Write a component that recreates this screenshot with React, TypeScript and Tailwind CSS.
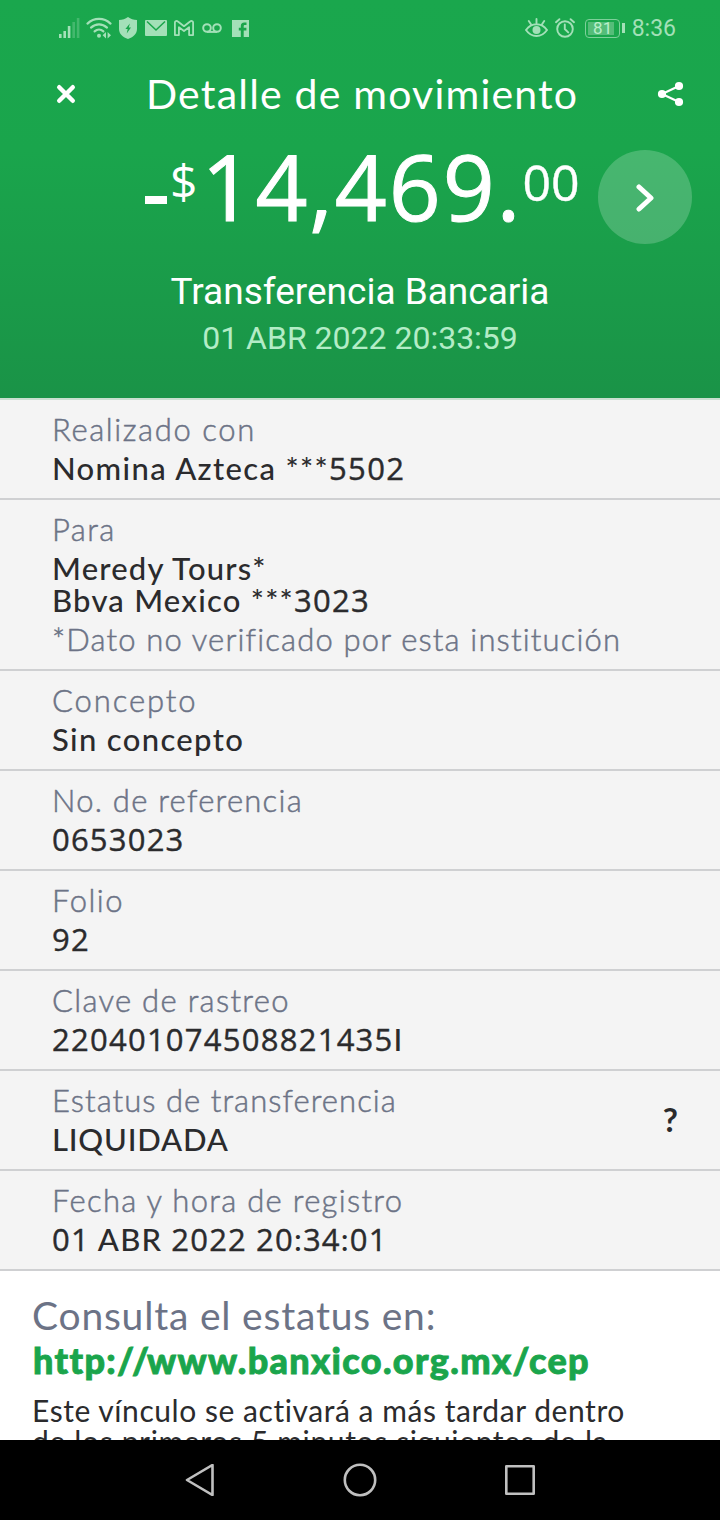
import clsx from 'clsx'

type Line = { text: string; muted?: boolean; className: string }

type Row = { label: string; labelClass: string; lines: Line[]; help?: boolean }

const ROWS: Row[] = [
  {
    label: 'Realizado con',
    labelClass: 'tracking-[1.6px]',
    lines: [{ text: 'Nomina Azteca ***5502', className: 'tracking-[1.35px]' }],
  },
  {
    label: 'Para',
    labelClass: 'tracking-[1.4px]',
    lines: [
      { text: 'Meredy Tours*', className: 'tracking-[1.2px]' },
      { text: 'Bbva Mexico ***3023', className: 'tracking-[1.25px]' },
      { text: '*Dato no verificado por esta institución', muted: true, className: 'tracking-[1.15px]' },
    ],
  },
  {
    label: 'Concepto',
    labelClass: 'tracking-[1.9px]',
    lines: [{ text: 'Sin concepto', className: 'tracking-[1.35px]' }],
  },
  {
    label: 'No. de referencia',
    labelClass: 'tracking-[1.25px]',
    lines: [{ text: '0653023', className: 'tracking-[1.2px]' }],
  },
  {
    label: 'Folio',
    labelClass: 'tracking-[1.5px]',
    lines: [{ text: '92', className: 'tracking-[1.2px]' }],
  },
  {
    label: 'Clave de rastreo',
    labelClass: 'tracking-[1.3px]',
    lines: [{ text: '220401074508821435I', className: 'tracking-[1.25px]' }],
  },
  {
    label: 'Estatus de transferencia',
    labelClass: 'tracking-[1.05px]',
    lines: [{ text: 'LIQUIDADA', className: 'tracking-[0.8px]' }],
    help: true,
  },
  {
    label: 'Fecha y hora de registro',
    labelClass: 'tracking-[1.3px]',
    lines: [{ text: '01 ABR 2022 20:34:01', className: 'tracking-[1.2px]' }],
  },
]

// Lato's "1" has a foot, so figures are set in Open Sans
function Figures({ text }: { text: string }) {
  return (
    <>
      {text.split(/(\d+)/).map((part, i) =>
        /^\d/.test(part) ? (
          <span key={i} className="font-['Open_Sans',sans-serif] font-normal [-webkit-text-stroke:0.4px]">{part}</span>
        ) : (
          part
        ),
      )}
    </>
  )
}

function StatusBar() {
  return (
    <div className="flex h-14 shrink-0 items-center pl-[58px] pr-11 text-[#a3e0b8]">
      <svg className="h-[22px] w-[22px]" viewBox="0 0 22 22" fill="currentColor">
        <rect x="1" y="17" width="2.6" height="4" />
        <rect x="5.4" y="14" width="2.6" height="7" />
        <rect x="9.8" y="9" width="2.6" height="12" />
        <rect x="14.4" y="5" width="2.6" height="16" opacity="0.3" />
        <rect x="18.8" y="1" width="2.6" height="20" opacity="0.3" />
      </svg>
      <svg className="ml-1.5 h-[22px] w-[26px]" viewBox="0 0 26 22" fill="none" stroke="currentColor" strokeWidth="2.2" strokeLinecap="round">
        <path d="M1.5 6.6C8 .4 18 .4 24.5 6.6" />
        <path d="M5 10.6c4.600-4.300 11.400-4.300 16 0" />
        <path d="M8.600 14.400c2.600-2.300 6.200-2.300 8.800 0" />
        <circle cx="13" cy="18.800" r="2" fill="currentColor" stroke="none" />
        <path d="M20 15v6.400l-3.400-3.200zM21.600 15v6.400l3.400-3.200z" fill="currentColor" stroke="none" />
      </svg>
      <svg className="ml-[7px] h-[22px] w-[18px]" viewBox="0 0 18 22">
        <path d="M9 0c2.600 2 5.600 3 9 3v9c0 5-4.200 8.400-9 10-4.800-1.600-9-5-9-10V3c3.400 0 6.400-1 9-3z" fill="currentColor" />
        <path d="M10.800 6.500 6.400 12h2.300l-1 4.500 4.300-6H9.800z" fill="#1aa54b" />
      </svg>
      <svg className="ml-2 h-4 w-[22px]" viewBox="0 0 22 16">
        <rect width="22" height="16" rx="1" fill="currentColor" />
        <path d="M2 1.500l9 8.500 9-8.500" fill="none" stroke="#1aa54b" strokeWidth="1.500" />
      </svg>
      <svg className="ml-[7px] h-4 w-5" viewBox="0 0 20 16" fill="none" stroke="currentColor" strokeWidth="1.800" strokeLinejoin="round">
        <path d="M.9 2.600C.9.900 2.700.5 3.900 1.500L10 6.200l6.100-4.700c1.200-1 3-.6 3 1.100v12.500h-4V7.200L10 11 4.900 7.200v7.900h-4z" />
      </svg>
      <svg className="ml-2 h-2.5 w-5" viewBox="0 0 20 10" fill="none" stroke="currentColor" strokeWidth="2">
        <circle cx="5" cy="5" r="3.800" />
        <circle cx="15" cy="5" r="3.800" />
        <path d="M5 8.900h10" />
      </svg>
      <svg className="ml-2.5 size-[17px]" viewBox="0 0 17 17">
        <rect width="17" height="17" fill="currentColor" />
        <path d="M8.800 17V10.500h-2V7.800h2V6c0-2.200 1.200-3.600 3.400-3.600h2.300v2.700h-1.600c-.8 0-1.200.4-1.200 1.200v1.500h2.700v2.700h-2.700V17z" fill="#1aa54b" />
      </svg>

      <svg className="ml-auto h-5 w-[23px]" viewBox="0 0 23 20" fill="none" stroke="currentColor" strokeWidth="1.900" strokeLinecap="round">
        <path d="M1 12c5.500-7.600 15.500-7.600 21 0-5.500 8-15.500 8-21 0zM11.500 1v4M3.800 3l2 3M19.200 3l-2 3" />
        <circle cx="11.500" cy="12" r="4" fill="currentColor" stroke="none" />
      </svg>
      <svg className="ml-[7px] size-5" viewBox="0 0 20 20" fill="none" stroke="currentColor" strokeWidth="1.900" strokeLinecap="round">
        <circle cx="10" cy="11" r="7.800" />
        <path d="M9.800 6.500V11l3.400 3.400M1 4.200 4.400 1.200M19 4.200l-3.400-3" />
      </svg>
      <div className="ml-2.5 flex h-[19px] w-[35px] rounded-[4px] border-[1.5px] border-[#7dd09a] p-0.5">
        <div className="flex h-full w-[26px] items-center justify-center bg-[#55bd79] pl-1 font-[Roboto,sans-serif] text-[17px] leading-none text-[#b9efca]">81</div>
      </div>
      <div className="ml-0.5 h-2.5 w-[3px] bg-current" />
      <span className="ml-[7px] font-[Roboto,sans-serif] text-[23px] leading-none">8:36</span>
    </div>
  )
}

function Header() {
  return (
    <header className="flex h-[400px] shrink-0 flex-col border-b-2 border-[#c9dfd0] bg-[linear-gradient(180deg,#1aa74d_0%,#1aa54c_38%,#1a9347_100%)] text-white">
      <StatusBar />
      <div className="flex h-[76px] items-center pl-[55px] pr-9">
        <svg className="size-[22px]" viewBox="0 0 22 22" fill="none" stroke="currentColor" strokeWidth="4.400" strokeLinecap="round">
          <path d="M4.200 4.200l13.600 13.600M17.800 4.200 4.200 17.800" />
        </svg>
        <h1 className="ml-[69px] whitespace-nowrap pb-0.5 text-[41px] leading-none tracking-[1.2px]">Detalle de movimiento</h1>
        <svg className="ml-auto h-[26px] w-[27px]" viewBox="0 0 27 26" fill="currentColor" stroke="currentColor" strokeWidth="2.200">
          <path d="M22 5 5 13l17 8" fill="none" />
          <circle cx="5" cy="13" r="3" />
          <circle cx="22" cy="5" r="3" />
          <circle cx="22" cy="21" r="3" />
        </svg>
      </div>
      <div className="mt-0.5 flex h-[118px] items-start pl-[143px] pr-7 font-['Open_Sans',sans-serif]">
        <div className="flex h-full w-[455px] items-start whitespace-nowrap">
          <span className="ml-0.5 mt-[62px] h-2 w-[22px] shrink-0 bg-white" />
          <span className="ml-[3px] mt-[23px] text-[48px] leading-none">$</span>
          <span className="ml-1 mt-[7px] text-[91px] leading-none tracking-[1.9px] [-webkit-text-stroke:1px]">14,469.</span>
          <span className="mt-[23px] text-[50px] leading-none [-webkit-text-stroke:0.4px]">00</span>
        </div>
        <button className="mt-4 flex size-[94px] shrink-0 items-center justify-center rounded-full bg-white/20">
          <svg className="mt-0.5 h-7 w-[18px]" viewBox="0 0 18 28" fill="none" stroke="currentColor" strokeWidth="5" strokeLinecap="round" strokeLinejoin="round">
            <path d="M3 3l12 11L3 25" />
          </svg>
        </button>
      </div>
      <p className="mt-[18px] text-center font-[Roboto,sans-serif] text-[37px] leading-[44px]">Transferencia Bancaria</p>
      <p className="mt-1 text-center font-[Roboto,sans-serif] text-[32px] leading-10 text-[#b3ecc6]">01 ABR 2022 20:33:59</p>
    </header>
  )
}

function DetailRow({ label, labelClass, lines, help }: Row) {
  return (
    <div className="flex items-center justify-between whitespace-nowrap border-b-2 border-[#cfd0d2] pb-[14px] pl-[52px] pr-[42px] pt-[9px] text-[31px]">
      <div>
        <p className={clsx('mb-[3px] font-light leading-[40px] text-[#6c7386] [-webkit-text-stroke:0.5px]', labelClass)}>{label}</p>
        {lines.map(({ text, muted, className }) => (
          <p
            key={text}
            className={clsx(
              muted
                ? '-mb-1 mt-1 font-light leading-[39px] text-[#6c7386] [-webkit-text-stroke:0.5px]'
                : 'font-medium leading-8 text-[#2b2b2d]',
              className,
            )}
          >
            <Figures text={text} />
          </p>
        ))}
      </div>
      {help && <span className="pt-[7px] pb-1 text-[33px] font-bold leading-none text-[#2b2b2d]">?</span>}
    </div>
  )
}

function NavBar() {
  return (
    <nav className="flex h-20 shrink-0 items-center justify-center gap-32 bg-black text-[#c0c0c0]">
      <svg className="size-8" viewBox="0 0 32 32" fill="none" stroke="currentColor" strokeWidth="2.600" strokeLinejoin="round">
        <path d="M28.500 1v30L3 16z" />
      </svg>
      <svg className="size-8 overflow-visible" viewBox="0 0 32 32" fill="none" stroke="currentColor" strokeWidth="2.600">
        <circle cx="16" cy="16" r="15.200" />
      </svg>
      <svg className="size-8" viewBox="0 0 32 32" fill="none" stroke="currentColor" strokeWidth="2.600" strokeLinejoin="round">
        <rect x="2.300" y="2.300" width="27.400" height="27.400" />
      </svg>
    </nav>
  )
}

export default function App() {
  return (
    <div className="flex h-[1520px] w-[720px] flex-col overflow-hidden bg-white font-[Lato,sans-serif]">
      <Header />
      <main className="shrink-0 bg-[#f4f4f4]">
        {ROWS.map((row) => (
          <DetailRow key={row.label} {...row} />
        ))}
      </main>
      <section className="h-0 flex-1 overflow-hidden whitespace-nowrap pl-8 pt-5">
        <h2 className="text-[39px] leading-[48px] tracking-[0.8px] text-[#6c7386]">Consulta el estatus en:</h2>
        <a className="block pl-px text-[36px] font-black leading-[42px] tracking-[1.35px] text-[#1aa54c] [-webkit-text-stroke:0.9px]">
          http:<span className="tracking-[-2px] [font-kerning:none]">//</span>www.banxico.org.mx/cep
        </a>
        <p className="mt-3.5 text-[30px] leading-[31px] tracking-[0.55px] text-[#2b2b2d]">
          Este vínculo se activará a más tardar dentro
          <br />
          <span className="tracking-[0.65px]">de los primeros 5 minutos siguientes de la</span>
        </p>
      </section>
      <NavBar />
    </div>
  )
}
